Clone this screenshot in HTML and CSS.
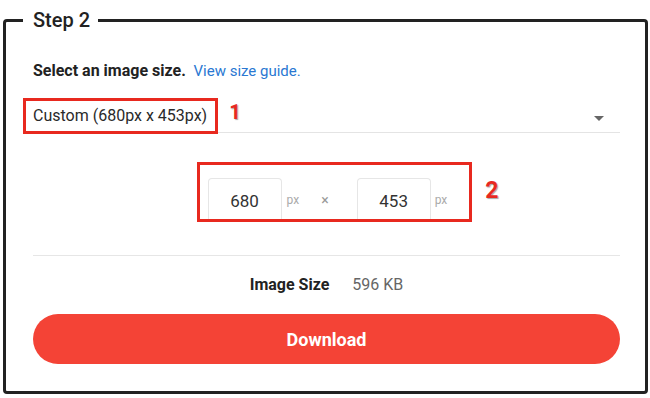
FILE: index.html
```html
<!DOCTYPE html>
<html lang="en">
<head>
    <meta charset="UTF-8">
    <meta name="viewport" content="width=device-width, initial-scale=1.0">
    <title>Step 2</title>
    <link rel="stylesheet" href="styles.css">
</head>
<body>
    <fieldset class="step">
        <legend class="step-title">Step 2</legend>
        <p class="intro"><b>Select an image size.</b> <a href="#" class="guide">View size guide.</a></p>
        <!-- dropdown with annotation 1 -->
        <div class="select">
            <span class="mark">Custom (680px x 453px)</span>
            <span class="num num-1">1</span>
            <span class="arrow"></span>
        </div>
        <!-- width x height, annotation 2 -->
        <div class="size-row">
            <div class="mark mark-size">
                <div class="field">680</div>
                <span class="unit">px</span>
                <span class="times">&times;</span>
                <div class="field">453</div>
                <span class="unit unit-last">px</span>
            </div>
            <span class="num num-2">2</span>
        </div>
        <div class="line"></div>
        <div class="info">
            <b>Image Size</b>
            <span class="kb">596 KB</span>
        </div>
        <button class="download">Download</button>
    </fieldset>
</body>
</html>
```

FILE: styles.css
```css
*{
    margin: 0;
    padding: 0;
    box-sizing: border-box;
}
body{
    background: #fff;
    font-family: Roboto, "Liberation Sans", sans-serif;
    color: #222;
}
.step{
    width: 645px;
    margin: 9px 0 0 3px;
    border: 3px solid #222;
    border-radius: 4px;
    padding: 30px 25px 27px 27px;
}
.step-title{
    margin-left: -10px;
    padding: 0 8px 0 10px;
    font-size: 20px;
    font-weight: 500;
    line-height: 22px;
    color: #222;
}
.intro{
    font-size: 15px;
    line-height: 20px;
}
.intro b{
    font-size: 16px;
    font-weight: 700;
    margin-right: 4px;
}
.guide{
    color: #2a78d2;
    text-decoration: none;
}
.select{
    display: flex;
    align-items: flex-start;
    height: 35px;
    margin-top: 17px;
    border-bottom: 1px solid #e4e4e4;
}
.mark{
    border: 3px solid #e8291f;
    background: #fff;
}
.select .mark{
    margin-left: -10px;
    height: 36px;
    padding: 0 8px 0 7px;
    font-size: 16px;
    line-height: 30px;
    color: #2a2a2a;
}
.num{
    color: #e8291f;
    font-weight: 700;
    text-shadow: 1px 1px 1px rgba(0,0,0,.35);
}
.num-1{
    margin: 4px 0 0 11px;
    font-size: 20px;
    line-height: 20px;
}
.arrow{
    margin: 18px 16px 0 auto;
    width: 0;
    height: 0;
    border-left: 5px solid transparent;
    border-right: 5px solid transparent;
    border-top: 5px solid #666;
}
.size-row{
    display: flex;
    align-items: flex-start;
    justify-content: center;
    margin-top: 29px;
    padding-left: 42px;
}
.mark-size{
    display: flex;
    align-items: center;
    padding: 13px 22px 0 8px;
}
.field{
    width: 74px;
    height: 41px;
    padding-top: 4px;
    border: 1px solid #e6e6e6;
    border-bottom: none;
    border-radius: 4px 4px 0 0;
    text-align: center;
    font-size: 17px;
    line-height: 37px;
    color: #333;
}
.unit{
    margin: 3px 0 0 5px;
    font-size: 12px;
    color: #aaa;
}
.unit-last{
    margin-left: 4px;
}
.times{
    margin: 3px 28px 0 22px;
    font-size: 14px;
    color: #999;
}
.num-2{
    margin: 17px 0 0 13px;
    font-size: 23px;
    line-height: 23px;
}
.line{
    height: 1px;
    margin-top: 33px;
    background: #e6e6e6;
}
.info{
    display: flex;
    justify-content: center;
    gap: 23px;
    margin-top: 19px;
    font-size: 16px;
    line-height: 20px;
}
.kb{
    color: #666;
}
.download{
    display: block;
    width: 100%;
    height: 50px;
    margin-top: 19px;
    border: none;
    border-radius: 25px;
    background: #f44336;
    color: #fff;
    font-family: Roboto, "Liberation Sans", sans-serif;
    font-size: 18px;
    font-weight: 700;
}
```
